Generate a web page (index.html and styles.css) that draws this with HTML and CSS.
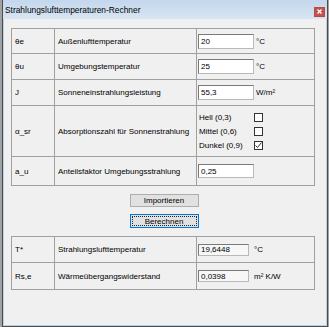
FILE: index.html
```html
<!DOCTYPE html>
<html lang="de">
<head>
  <meta charset="UTF-8" />
  <title>Strahlungslufttemperaturen-Rechner</title>
  <link rel="stylesheet" href="styles.css">
</head>
<body>
  <div class="window">
    <div class="titlebar">
      <span class="title">Strahlungslufttemperaturen-Rechner</span>
      <span class="close">
        <svg width="5" height="5" viewBox="0 0 5 5"><path d="M0.5 0.5 L4.5 4.5 M4.5 0.5 L0.5 4.5" stroke="#fff" stroke-width="1.3"/></svg>
      </span>
    </div>

    <div class="content">
      <div class="grid inputs">
        <div class="cell sym">θe</div>
        <div class="cell">Außenlufttemperatur</div>
        <div class="cell field"><span class="box">20</span><span class="unit">°C</span></div>

        <div class="cell sym">θu</div>
        <div class="cell">Umgebungstemperatur</div>
        <div class="cell field"><span class="box">25</span><span class="unit">°C</span></div>

        <div class="cell sym">J</div>
        <div class="cell">Sonneneinstrahlungsleistung</div>
        <div class="cell field"><span class="box">55,3</span><span class="unit">W/m²</span></div>

        <div class="cell sym">α_sr</div>
        <div class="cell">Absorptionszahl für Sonnenstrahlung</div>
        <div class="cell checks">
          <span>Hell (0,3)</span><span class="check"></span>
          <span>Mittel (0,6)</span><span class="check"></span>
          <span>Dunkel (0,9)</span>
          <span class="check">
            <svg width="9" height="9" viewBox="0 0 9 9"><path d="M1.5 4.5 L3.5 6.5 L7.5 1.5" fill="none" stroke="#333" stroke-width="1"/></svg>
          </span>
        </div>

        <div class="cell sym">a_u</div>
        <div class="cell">Anteilsfaktor Umgebungsstrahlung</div>
        <div class="cell field"><span class="box tall">0,25</span></div>
      </div>

      <div class="buttons">
        <button class="btn">Importieren</button>
        <button class="btn focused"><span>Berechnen</span></button>
      </div>

      <div class="grid outputs">
        <div class="cell sym">T*</div>
        <div class="cell">Strahlungslufttemperatur</div>
        <div class="cell field"><span class="box out">19,6448</span><span class="unit wide">°C</span></div>

        <div class="cell sym">Rs,e</div>
        <div class="cell">Wärmeübergangswiderstand</div>
        <div class="cell field"><span class="box out">0,0398</span><span class="unit wide">m² K/W</span></div>
      </div>
    </div>
  </div>
</body>
</html>
```

FILE: styles.css
```css
body {
  margin: 0;
  background: #a2a2a2;
  font-family: 'Liberation Sans', Arial, sans-serif;
  font-size: 8px;
  color: #000;
}

.window {
  margin-left: 2px;
  width: 324px;
  height: 326px;
  border: 1px solid #4c4c4c;
  border-top: none;
  display: flex;
  flex-direction: column;
}

.titlebar {
  height: 19px;
  flex: none;
  display: flex;
  align-items: center;
  justify-content: space-between;
  padding: 0 2px 0 2px;
  background: linear-gradient(#c3d7ed, #d8e5f3);
}

.title {
  font-size: 8.4px;
  color: #000;
  margin-top: 1px;
}

.close {
  width: 11px;
  height: 10px;
  margin-top: 4px;
  background: #c75050;
  border: 1px solid #b44a4a;
  box-sizing: border-box;
  display: flex;
  align-items: center;
  justify-content: center;
}

.content {
  flex: 1;
  background: #f0f0f0;
  border: 1px solid #b5d1ec;
  border-top: none;
  padding: 9px 0 0 7px;
}

.grid {
  display: grid;
  grid-template-columns: 42px 141px 117px;
  gap: 1px;
  padding: 1px;
  width: 302px;
  background: #a0a0a0;
}

.inputs {
  grid-template-rows: 24px 25px 25px 50px 28px;
}

.outputs {
  grid-template-rows: 25px 26px;
}

.cell {
  background: #f0f0f0;
  display: flex;
  align-items: center;
  padding-left: 3px;
}

.field {
  padding-left: 1px;
}

.box {
  width: 56px;
  height: 15px;
  box-sizing: border-box;
  background: #fff;
  border: 1px solid #7a7a7a;
  border-right-color: #b9b9b9;
  border-bottom-color: #b9b9b9;
  padding-left: 2px;
  display: flex;
  align-items: center;
}

.box.tall {
  height: 14px;
}

.box.out {
  width: 51px;
  height: 12px;
  background: #f7f7f7;
}

.unit {
  margin-left: 2px;
}

.unit.wide {
  margin-left: 5px;
}

.checks {
  display: grid;
  grid-template-columns: 55px 9px;
  grid-auto-rows: 14px;
  align-items: center;
  align-content: center;
  padding-left: 2px;
}

.check {
  width: 9px;
  height: 9px;
  box-sizing: border-box;
  border: 1px solid #333;
  background: #fff;
  display: flex;
}

.check svg {
  margin: -1px;
}

.buttons {
  width: 304px;
  display: flex;
  flex-direction: column;
  align-items: center;
  gap: 7px;
  padding: 8px 0 8px 1px;
}

.btn {
  width: 69px;
  height: 13px;
  padding: 0;
  margin: 0;
  font-family: inherit;
  font-size: 8px;
  color: #000;
  background: #e1e1e1;
  border: 1px solid #adadad;
  display: flex;
  align-items: center;
  justify-content: center;
}

.btn.focused {
  height: 14px;
  border-color: #0078d7;
  padding: 1px;
}

.btn.focused span {
  flex: 1;
  align-self: stretch;
  display: flex;
  align-items: center;
  justify-content: center;
  border: 1px dotted #222;
}
```
